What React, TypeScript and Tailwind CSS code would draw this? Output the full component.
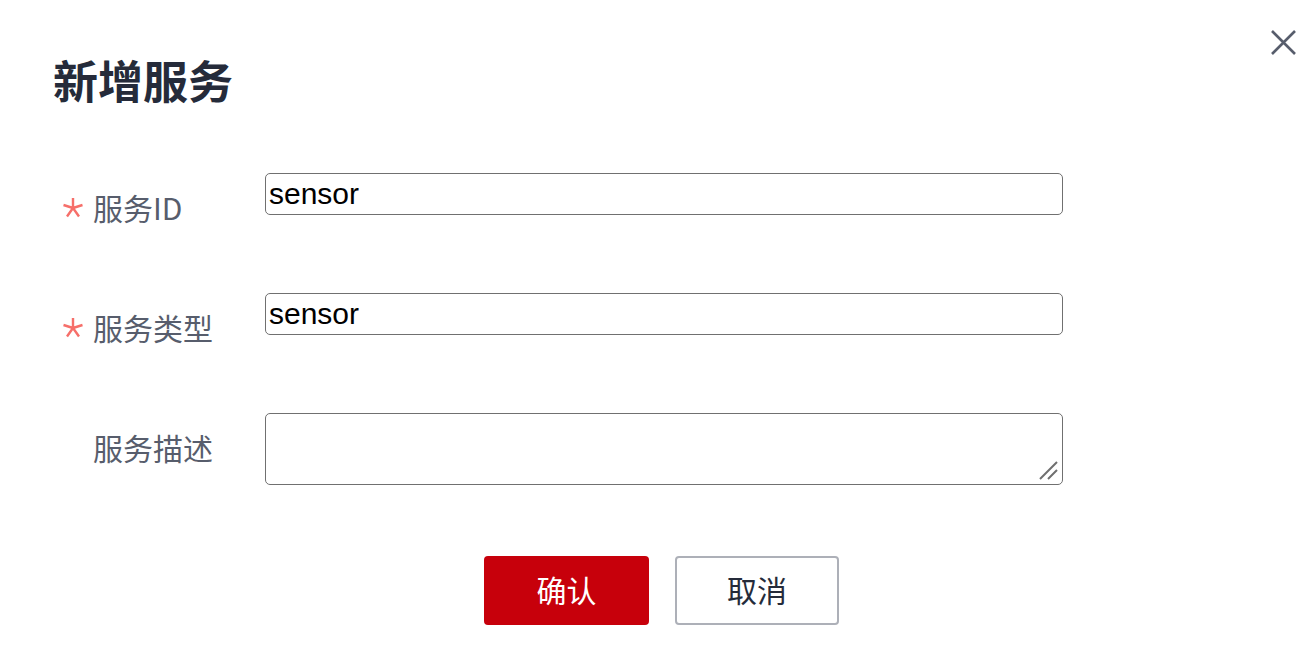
import React from "react";

export default function App() {
  const cjk = { fontFamily: '"Noto Sans CJK SC", "Noto Sans", sans-serif' };
  const latin = { fontFamily: '"Liberation Sans", Arial, sans-serif' };
  const Star = () => (
    <span className="w-[30px] h-[30px] flex items-center shrink-0">
      <svg viewBox="0 0 22 22" width="22" height="22" className="-ml-[1px] mt-[2px]">
        <path d="M11 11 V1 M11 11 L1.5 8 M11 11 L20.5 8 M11 11 L5 19.5 M11 11 L17 19.5" stroke="#f66f6a" strokeWidth="2.4" strokeLinecap="butt" fill="none" />
      </svg>
    </span>
  );
  return (
    <div className="relative w-[1310px] h-[648px] bg-white overflow-hidden" style={cjk}>
      <button className="absolute left-[1271px] top-[30px] w-[25px] h-[25px] text-[#575d6c]">
        <svg viewBox="0 0 25 25" width="25" height="25">
          <path d="M1 1 L24 24 M24 1 L1 24" stroke="currentColor" strokeWidth="2.6" fill="none" />
        </svg>
      </button>
      <div className="pl-[53px] pt-[50px]">
        <h1 className="text-[45px] leading-[60px] font-bold text-[#252b3a]">新增服务</h1>
      </div>
      <div className="flex flex-col gap-[78px] mt-[63px]">
        <div className="flex">
          <div className="w-[265px] shrink-0 flex items-center pl-[63px] pt-[12px] h-[56px]">
            <Star />
            <span className="text-[#575d6c] text-[30px] leading-none">服务ID</span>
          </div>
          <input
            defaultValue="sensor"
            className="w-[798px] h-[42px] border-[1.5px] border-[#707070] rounded-[5px] px-[3px] pb-[2px] text-[30px] text-black outline-none"
            style={latin}
          />
        </div>
        <div className="flex -mt-[14px]">
          <div className="w-[265px] shrink-0 flex items-center pl-[63px] pt-[12px] h-[56px]">
            <Star />
            <span className="text-[#575d6c] text-[30px] leading-none">服务类型</span>
          </div>
          <input
            defaultValue="sensor"
            className="w-[798px] h-[42px] border-[1.5px] border-[#707070] rounded-[5px] px-[3px] pb-[2px] text-[30px] text-black outline-none"
            style={latin}
          />
        </div>
        <div className="flex -mt-[14px]">
          <div className="w-[265px] shrink-0 flex items-center pl-[93px] pt-[12px] h-[56px]">
            <span className="text-[#575d6c] text-[30px] leading-none">服务描述</span>
          </div>
          <div className="relative">
            <textarea
              className="block w-[798px] h-[72px] border-[1.5px] border-[#707070] rounded-[5px] px-[3px] text-[30px] text-black outline-none resize-none"
              style={latin}
            />
            <svg className="absolute right-[4px] bottom-[4px] pointer-events-none" width="22" height="22" viewBox="0 0 22 22">
              <path d="M3 20 L20 3 M11 20 L20 11" stroke="#6f6f6f" strokeWidth="2" fill="none" />
            </svg>
          </div>
        </div>
      </div>
      <div className="flex gap-[26px] pl-[484px] mt-[71px]">
        <button className="w-[165px] h-[69px] rounded-[4px] bg-[#c7000b] text-white text-[30px] pb-[3px]">确认</button>
        <button className="w-[164px] h-[69px] rounded-[4px] border-2 border-[#adb0b8] text-[#252b3a] text-[30px] pb-[3px] bg-white">取消</button>
      </div>
    </div>
  );
}
